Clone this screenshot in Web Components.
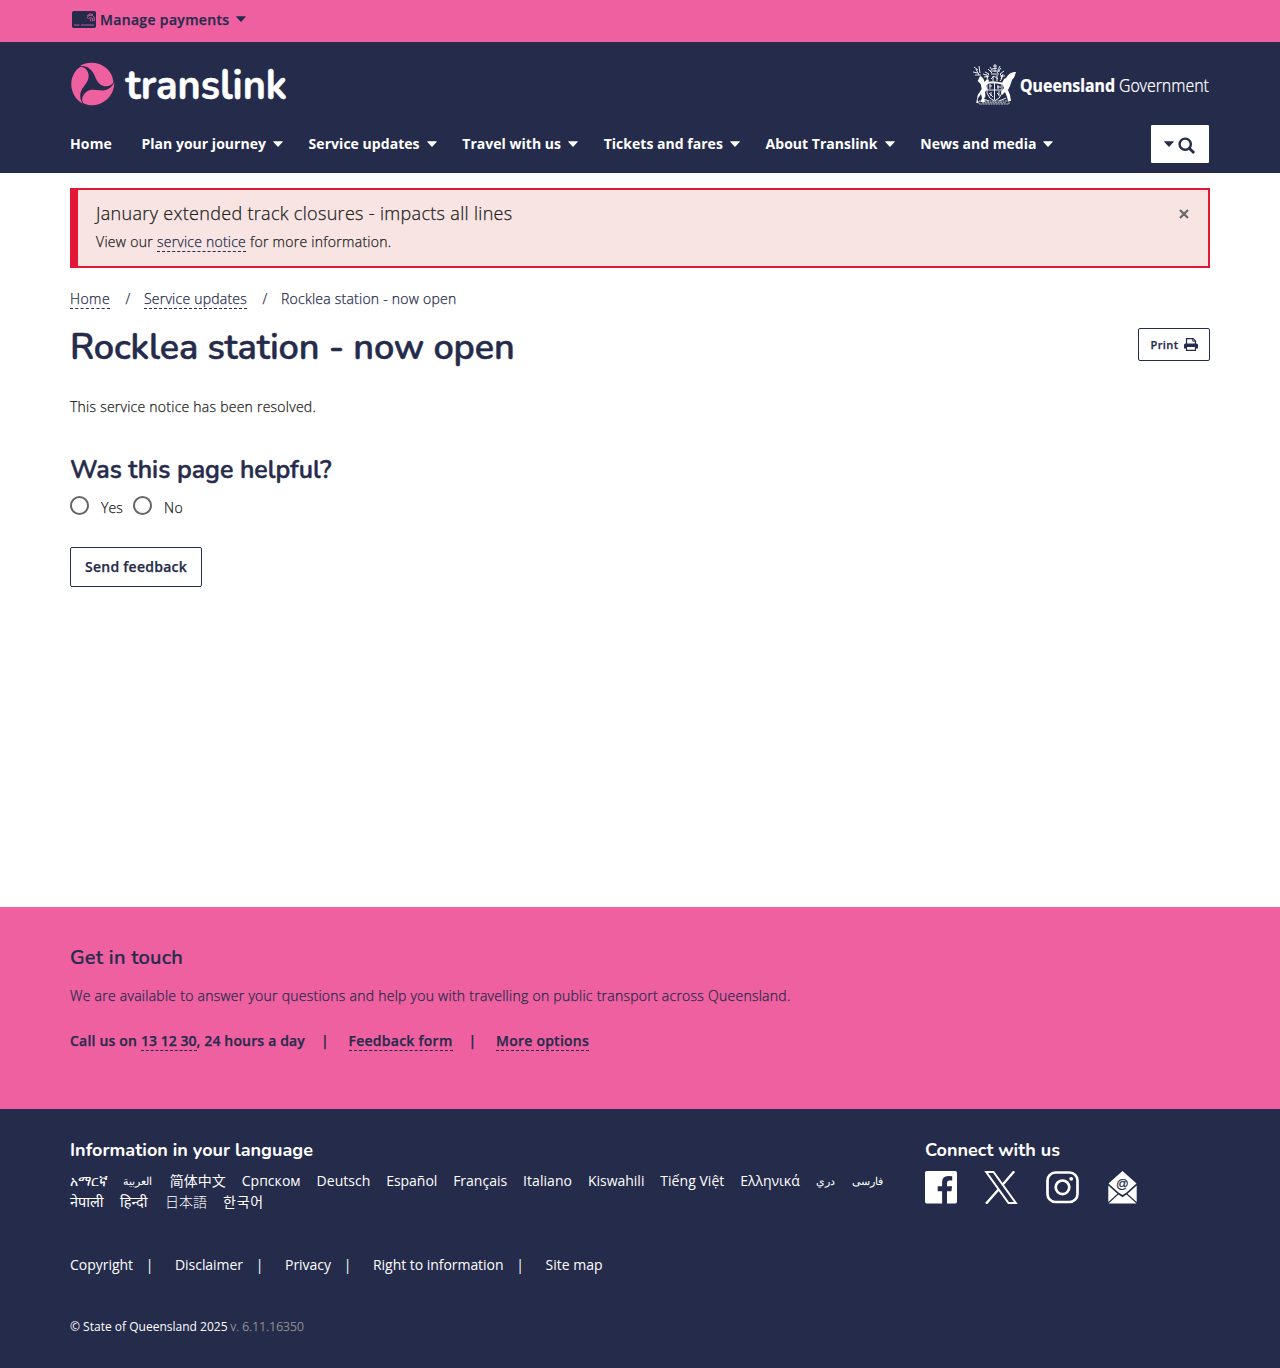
<!DOCTYPE html>
<html lang="en">
<head>
<meta charset="utf-8">
<title>Rocklea station - now open | Translink</title>
<style>
body{margin:0;font-family:"Open Sans","Noto Sans",sans-serif;font-size:14px;color:#222;background:#fff}
</style>
</head>
<body>
<tl-page></tl-page>
<script>
const NAVY='#252b4b', PINK='#ef60a1';
const LIGHT='font-weight:300;-webkit-text-stroke:.25px currentColor;';
const SEMI='font-weight:600;-webkit-text-stroke:.25px currentColor;';
function define(name,html,after){
  customElements.define(name,class extends HTMLElement{
    constructor(){super();this.attachShadow({mode:'open'}).innerHTML=html;}
    connectedCallback(){if(after)after(this);}
  });
}

/* One line of text, tracked so that it fills the measure given in "w".
   "box" only fixes the width, for joined scripts that must not be tracked. */
define('tl-line',`<style>:host{display:block;white-space:nowrap}span{display:inline-block;white-space:pre}</style><span><slot></slot></span>`,el=>{
  const box=el.getAttribute('box'); if(box)el.style.width=box+'px';
  const w=+el.getAttribute('w'); if(!w)return;
  const s=el.shadowRoot.querySelector('span');
  const n=[...el.textContent].length;
  s.style.letterSpacing='0px';
  const nat=s.getBoundingClientRect().width;
  s.style.letterSpacing=((w-nat)/n).toFixed(4)+'px';
});

define('tl-link',`<style>:host{display:inline-block;border-bottom:1px dashed currentColor;line-height:18px;height:18px}</style><slot></slot>`);
define('tl-caret',`<style>:host{display:block;width:10px;height:6px}svg{display:block}</style><svg width="10" height="6" viewBox="0 0 10 6"><path d="M.6.3h8.8q.8 0 .2.6L5.5 5.4q-.5.5-1 0L.4.9Q-.2.3.6.3z" fill="currentColor"/></svg>`);

define('tl-payments',`<style>
:host{display:block;height:42px;background:${PINK};color:${NAVY}}
div{display:flex;align-items:center;width:1140px;margin:0 auto;height:39px;${SEMI}}
svg{margin:-1px 4px 0 2px;flex:none}tl-caret svg{margin:0}tl-caret{margin-left:6.500px;margin-top:-1px}
</style><div><svg width="24" height="17" viewBox="0 0 24 17"><rect width="24" height="17" rx="1.800" fill="${NAVY}"/><path d="M2 14h5.500M9 14h13" stroke="${PINK}" stroke-width=".8"/><g fill="none" stroke="${PINK}" stroke-width=".85"><path d="M15 7.200a3.800 3.800 0 0 1 7-1.200q.5 1.500.3 4M16.500 8a2.300 2.300 0 0 1 4.200 0v2.500M18.700 7.700v2.500M15.200 4.700q2.500-3 5.800-1.200"/></g></svg>
<tl-line w="129.500">Manage payments</tl-line><tl-caret></tl-caret></div>`);

const LOBE='M9.500 3.600C15 .200 22 -.800 29 1.700C38 5 43.300 13 43.300 20.500C41 24.300 36.500 25 32.700 23.600C27.800 21.800 26 17.500 24 12.700C21.500 6.700 16.500 3.200 9.500 3.600z';
define('tl-logo',`<style>:host{display:block;width:218px;height:44px}svg{display:block;overflow:visible}</style>
<svg width="218" height="44" viewBox="0 0 218 44"><g fill="${PINK}" transform="translate(-.3 .4) scale(.985)">${[0,120,240].map(a=>`<path d="${LOBE}" transform="rotate(${a} 22 22)"/>`).join('')}</g>
<text x="54.500" y="37" textLength="161.500" lengthAdjust="spacingAndGlyphs" font-family="Nunito" font-weight="700" font-size="41" fill="#fff" stroke="#fff" stroke-width=".5">translink</text></svg>`);

define('tl-crest',`<style>:host{display:block;width:236px;height:42px}svg{display:block;overflow:visible}</style>
<svg width="236" height="42" viewBox="0 0 236 42" fill="none" stroke="#fff">
<path fill="#fff" stroke="none" d="M7 12q3.500 1 4.500 6l2.500-3 2 3-3 4 1.500 3-2.500 3 .5 4-1.500 3 1 3H7.500l1.500-4-1-4-3.500 5 1 4H3.200l1.500-8 4-6-1-5-3-3zM33 14q4-7 10-6-1 5-4 8l-2 6-2 4 2 5 1 6h-3l-1-4-2-5-3 3-1-3 3-4-2-5 2-4z"/>
<g stroke-width=".9"><path d="M1 3l4 3M0 8l5 1M3 5l3 6M6 2l1 7M2 11l6 0"/>
<path d="M14 19h15v10q-2 6-7.500 8-5.500-2-7.500-8zM14 26h15M21.500 19v17M16 22h3M25 21v4M16 29l4 4M24 29l2 2M17 20v5M24 23h4M18 28v4M26 27v5"/>
<path d="M16 17q-4-4 0-7M27 17q4-4 0-7M18 15l3-3 4 3M18 10h8M17 7h10M20 2l4 0M22 0v8M15 5l4 4M28 4l-4 5M12 8l4 2M31 7l-4 3M11 13l5-1M32 12l-5 0M17 3l2 3M27 2l-2 4M20 12v5M24 11v6M13 10l2 4M30 10l-2 5M19 5l5-1M10 10l3 1"/>
<path d="M13 20q5-4 17 0" stroke-width="1.500"/><path d="M6 37h30v3H6zM9 38.700h24" stroke-width=".7" stroke-dasharray="2 .6"/>
<path d="M10 35l6 2M33 34l-7 3"/></g>
<g fill="#fff" stroke="#fff" stroke-width=".2" font-size="17.500"><text x="47" y="27.500" textLength="95" lengthAdjust="spacingAndGlyphs" font-family="Noto Sans" font-weight="700">Queensland</text><text x="146" y="27.500" textLength="90" lengthAdjust="spacingAndGlyphs" font-family="Noto Sans" font-weight="300">Government</text></g></svg>`);

define('tl-nav-item',`<style>:host{display:flex;align-items:center;font-weight:700;color:#fff}tl-caret{margin-left:7px;margin-top:1px}:host([plain]) tl-caret{display:none}</style><slot></slot><tl-caret></tl-caret>`);

define('tl-search',`<style>:host{display:flex;align-items:center;justify-content:center;gap:4px;width:58px;height:38px;background:#fff;color:${NAVY};border-radius:1px;box-sizing:border-box;padding-top:3px}tl-caret{margin-top:-4px}</style><tl-caret></tl-caret><svg width="18" height="18" viewBox="0 0 18 18" fill="none" stroke="currentColor"><circle cx="7.200" cy="7.200" r="5.600" stroke-width="2.400"/><path d="M11.500 11.500l4.600 4.600" stroke-width="2.800"/></svg>`);

define('tl-header',`<style>
:host{display:block;height:131px;background:${NAVY}}
.in{width:1140px;margin:0 auto;display:flex;flex-direction:column}
.brand{display:flex;justify-content:space-between;padding:20px 1px 0;height:61px;align-items:flex-start}
tl-crest{margin-top:2px}
nav{display:flex;align-items:center;height:40px}
tl-nav-item{margin-right:25.700px}tl-nav-item[plain]{margin-right:29.500px}
tl-search{margin:2px 1px 0 auto}
</style><div class="in"><div class="brand"><tl-logo></tl-logo><tl-crest></tl-crest></div>
<nav><tl-nav-item plain><tl-line w="42">Home</tl-line></tl-nav-item><tl-nav-item><tl-line w="124.400">Plan your journey</tl-line></tl-nav-item><tl-nav-item><tl-line w="111">Service updates</tl-line></tl-nav-item><tl-nav-item><tl-line w="98.700">Travel with us</tl-line></tl-nav-item><tl-nav-item><tl-line w="119.200">Tickets and fares</tl-line></tl-nav-item><tl-nav-item><tl-line w="112">About Translink</tl-line></tl-nav-item><tl-nav-item><tl-line w="116.200">News and media</tl-line></tl-nav-item><tl-search></tl-search></nav></div>`);

define('tl-alert',`<style>
:host{display:flex;justify-content:space-between;box-sizing:border-box;height:80px;border:2px solid #e31837;border-left-width:8px;background:#f8e5e3;padding:10px 18px;color:#222}
.t{font-size:18px;${LIGHT}line-height:26px}.m{display:flex;${LIGHT}margin-top:6px;line-height:20px;height:20px}
tl-link{color:${NAVY};line-height:20px;height:19px}
svg{margin:9px 1px 0 0}
</style><div><tl-line class="t" w="416.500">January extended track closures - impacts all lines</tl-line><div class="m"><tl-line w="61">View our </tl-line><tl-link><tl-line w="89">service notice</tl-line></tl-link><tl-line w="145.500"> for more information.</tl-line></div></div>
<svg width="10" height="10" viewBox="0 0 10 10"><path d="M1 1l8 8M9 1l-8 8" stroke="#666" stroke-width="2.200"/></svg>`);

define('tl-crumbs',`<style>:host{display:flex;${LIGHT}line-height:20px;height:20px;color:${NAVY}}i{font-style:normal;width:34px;text-align:center;padding-left:2px;box-sizing:border-box}tl-link{line-height:20px;height:19px}</style><tl-link><tl-line w="40">Home</tl-line></tl-link><i>/</i><tl-link><tl-line w="103">Service updates</tl-line></tl-link><i>/</i><tl-line w="175.500">Rocklea station - now open</tl-line>`);

define('tl-print',`<style>:host{display:flex;align-items:center;justify-content:center;gap:5px;box-sizing:border-box;width:72px;height:33px;border:1px solid ${NAVY};border-radius:2px;color:${NAVY};font-size:11px;${SEMI}}</style><tl-line w="28">Print</tl-line><svg width="14" height="13" viewBox="0 0 14 13"><path d="M2.500 6V.6h6.700l2.300 2.300V6" fill="none" stroke="currentColor" stroke-width="1.200"/><path d="M8.800.6V3.200h2.700" fill="none" stroke="currentColor"/><path d="M1.500 5.500h11Q14 5.600 14 7v3.500h-2.500v-1.500h-9v1.500H0V7Q0 5.600 1.500 5.500z" fill="currentColor"/><path d="M2.500 8.500v3.900h9V8.500" fill="none" stroke="currentColor" stroke-width="1.200"/></svg>`);

define('tl-radio',`<style>:host{display:flex;${LIGHT}line-height:20px}i{box-sizing:border-box;width:19px;height:19px;border:2px solid #666;border-radius:50%;margin-right:12px;margin-top:-2px}</style><i></i><slot></slot>`);

define('tl-main',`<style>
:host{display:block;width:1140px;height:734px;margin:0 auto;padding-top:15px;box-sizing:border-box}
tl-crumbs{margin-top:21px}
.head{display:flex;justify-content:space-between;align-items:flex-start;margin-top:19px;height:50px}
h1,h2{margin:0;color:${NAVY};font-weight:600;-webkit-text-stroke:.5px currentColor;font-family:"Nunito","Lato",sans-serif}
h1{font-size:36px;line-height:40px}
h2{font-size:25px;line-height:32px;margin-top:37px}
.p{${LIGHT}margin-top:19px;line-height:20px}
.r{display:flex;gap:10px;margin-top:12px}
.b{display:flex;align-items:center;justify-content:center;box-sizing:border-box;width:132px;height:40px;margin-top:29px;border:1px solid ${NAVY};border-radius:2px;color:${NAVY};${SEMI}padding-bottom:2px}
</style><tl-alert></tl-alert><tl-crumbs></tl-crumbs><div class="head"><h1><tl-line w="444.500">Rocklea station - now open</tl-line></h1><tl-print></tl-print></div>
<tl-line class="p" w="246">This service notice has been resolved.</tl-line><h2><tl-line w="261.500">Was this page helpful?</tl-line></h2>
<div class="r"><tl-radio><tl-line w="22">Yes</tl-line></tl-radio><tl-radio><tl-line w="19">No</tl-line></tl-radio></div>
<div class="b"><tl-line w="102">Send feedback</tl-line></div>`);

define('tl-contact',`<style>
:host{display:block;height:202px;background:${PINK};color:${NAVY};box-sizing:border-box;padding-top:37px}
.in{width:1140px;margin:0 auto}
h3{margin:0;font-family:"Nunito","Lato",sans-serif;font-size:20px;line-height:28px;font-weight:600;-webkit-text-stroke:.2px currentColor}
.p{${LIGHT}margin-top:14px;line-height:20px}.c{display:flex;${SEMI}margin-top:25px;line-height:20px}
i{font-style:normal;width:43.500px;text-align:center;box-sizing:border-box;padding-right:4px}
tl-link{line-height:20px;height:19px}
</style><div class="in"><h3><tl-line w="113">Get in touch</tl-line></h3><tl-line class="p" w="720.500">We are available to answer your questions and help you with travelling on public transport across Queensland.</tl-line>
<div class="c"><tl-line w="71">Call us on </tl-line><tl-link><tl-line w="55.500">13 12 30</tl-line></tl-link><tl-line w="108.500">, 24 hours a day</tl-line><i>|</i><tl-link><tl-line w="104">Feedback form</tl-line></tl-link><i>|</i><tl-link><tl-line w="93">More options</tl-line></tl-link></div></div>`);

define('tl-social',`<style>:host{display:flex;color:#fff}svg{display:block;flex:none}</style>
<svg width="32" height="33" viewBox="0 0 32 33" style="margin-right:27px"><path fill="#fff" d="M1.800 0H30.200Q32 0 32 1.800V30.700Q32 32.500 30.200 32.500H22V20.200h4.400l.7-5H22V12q0-2.400 2.500-2.400h2.700V5.200q-1.800-.3-3.900-.3-6.200 0-6.200 6.400v3.900h-4.400v5h4.400V32.500H1.800Q0 32.500 0 30.700V1.800Q0 0 1.800 0z"/></svg>
<svg width="34" height="33" viewBox="0 0 34 33" style="margin-right:28px"><path fill="none" stroke="#fff" stroke-width="2" d="M2.200 1h7.300l22.300 31h-7.300z"/><path stroke="#fff" stroke-width="2.400" d="M30.200.3L18.800 13.500M14.300 18.700L2 32.700"/></svg>
<svg width="33" height="33" viewBox="0 0 33 33" style="margin-right:29px"><rect x="1.500" y="1.500" width="30" height="29.500" rx="8" fill="none" stroke="#fff" stroke-width="2.700"/><circle cx="16.500" cy="16.300" r="6.800" fill="none" stroke="#fff" stroke-width="2.700"/><circle cx="25.200" cy="7.800" r="1.900" fill="#fff"/></svg>
<svg width="29" height="33" viewBox="0 0 29 33"><path fill="#fff" d="M14.500 0L28.500 12.500 18.500 21.500 14.500 24 10.500 21.500.5 12.500zM.3 14.500L9.500 22.700.3 31zM28.700 14.500L19.500 22.700 28.700 31zM10.500 23.500L14.500 26.300 18.500 23.500 28.500 32.500H.5z"/><text x="14.300" y="16.500" font-family="Liberation Sans" font-size="12.500" font-weight="400" text-anchor="middle" fill="${NAVY}" stroke="${NAVY}" stroke-width=".25">@</text></svg>`);

define('tl-footer',`<style>
:host{display:block;height:259px;background:${NAVY};color:#fff;box-sizing:border-box;padding-top:28px}
.in{width:1140px;margin:0 auto}.top{display:flex}.l{width:855px}
h3{margin:0;font-family:"Nunito","Lato",sans-serif;font-size:18px;line-height:26px;font-weight:700}
.g{display:flex;gap:16px;line-height:21px;height:21px;font-family:"Open Sans","Noto Sans","Noto Sans CJK SC",sans-serif}
.g:first-of-type{margin-top:7px;gap:15.900px}
.ar{font-size:10.800px}.hi{font-size:14.500px}
[lang=ja]{font-family:"Noto Sans CJK JP",sans-serif;font-weight:300}[lang=ko]{font-family:"Noto Sans CJK KR",sans-serif}
tl-social{margin-top:8px}
.k{display:flex;line-height:20px;margin-top:43px}i{font-style:normal;width:42px;text-align:center;box-sizing:border-box;padding-right:9px}
.c{display:flex;font-size:12px;line-height:18px;margin-top:43px}.v{color:#999;${LIGHT}margin-left:3px}
</style><div class="in"><div class="top"><div class="l"><h3><tl-line w="243">Information in your language</tl-line></h3>
<div class="g"><tl-line w="37.500">አማርኛ</tl-line><tl-line class="ar" box="30.500">العربية</tl-line><tl-line w="56">简体中文</tl-line><tl-line w="59">Српском</tl-line><tl-line w="53.800">Deutsch</tl-line><tl-line w="51">Español</tl-line><tl-line w="54">Français</tl-line><tl-line w="49">Italiano</tl-line><tl-line w="56.500">Kiswahili</tl-line><tl-line w="64">Tiếng Việt</tl-line><tl-line w="59.500">Ελληνικά</tl-line><tl-line class="ar" box="20.500">دري</tl-line><tl-line class="ar" box="32">فارسی</tl-line></div>
<div class="g"><tl-line class="hi" box="34">नेपाली</tl-line><tl-line class="hi" box="29">हिन्दी</tl-line><tl-line lang="ja" box="42">日本語</tl-line><tl-line lang="ko" w="41">한국어</tl-line></div></div>
<div><h3><tl-line w="135">Connect with us</tl-line></h3><tl-social></tl-social></div></div>
<div class="k"><tl-line w="63">Copyright</tl-line><i>|</i><tl-line w="68">Disclaimer</tl-line><i>|</i><tl-line w="46">Privacy</tl-line><i>|</i><tl-line w="130.500">Right to information</tl-line><i>|</i><tl-line w="57">Site map</tl-line></div>
<div class="c"><tl-line w="157.500">© State of Queensland 2025</tl-line><tl-line class="v" w="73.500">v. 6.11.16350</tl-line></div></div>`);

define('tl-page',`<style>:host{display:block;height:1368px;overflow:hidden}</style><tl-payments></tl-payments><tl-header></tl-header><tl-main></tl-main><tl-contact></tl-contact><tl-footer></tl-footer>`);
</script>
</body>
</html>
